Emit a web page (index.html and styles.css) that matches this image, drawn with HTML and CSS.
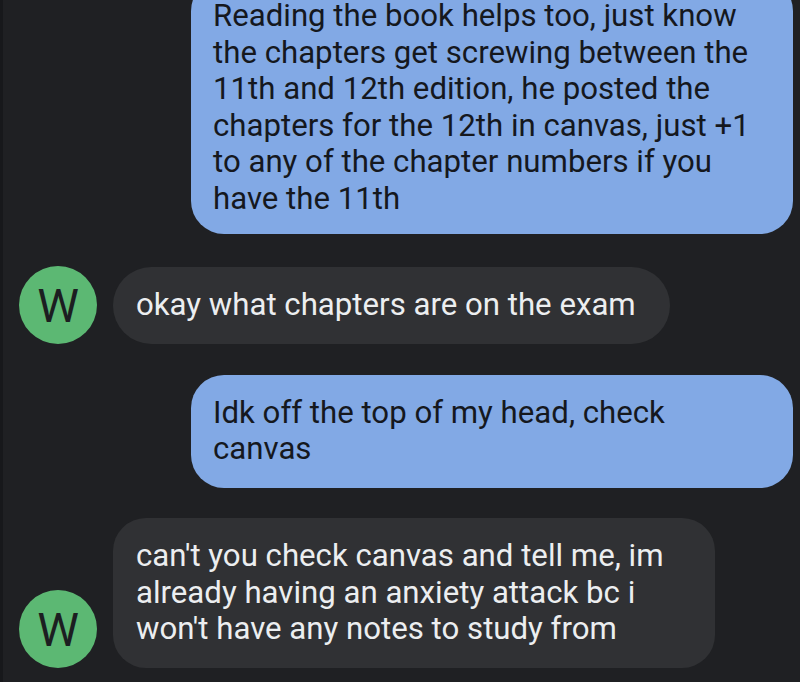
FILE: index.html
```html
<!DOCTYPE html>
<html>
<head>
<meta charset="utf-8">
<link rel="stylesheet" href="styles.css">
</head>
<body>
<div class="chat">
  <div class="row sent first">
    <div class="bubble blue">Reading the book helps too, just know<br>the chapters get screwing between the<br>11th and 12th edition, he posted the<br>chapters for the 12th in canvas, just +1<br>to any of the chapter numbers if you<br>have the 11th</div>
  </div>
  <div class="row recv">
    <div class="avatar">W</div>
    <div class="bubble grey">okay what chapters are on the exam</div>
  </div>
  <div class="row sent">
    <div class="bubble blue">Idk off the top of my head, check<br>canvas</div>
  </div>
  <div class="row recv">
    <div class="avatar">W</div>
    <div class="bubble grey wide">can't you check canvas and tell me, im<br>already having an anxiety attack bc i<br>won't have any notes to study from</div>
  </div>
</div>
</body>
</html>
```

FILE: styles.css
```css
html, body {
  margin: 0;
  padding: 0;
  background: #1f2023;
  height: 100%;
  overflow: hidden;
}
body {
  border-left: 3px solid #17181b;
  box-sizing: border-box;
  font-family: Roboto, "Noto Sans", sans-serif;
}
.chat {
  display: flex;
  flex-direction: column;
  gap: 30.5px;
  padding: 0 7px 0 16px;
  margin-top: -22px;
}
.row {
  display: flex;
  align-items: flex-end;
}
.sent {
  justify-content: flex-end;
}
.first {
  margin-bottom: 2px;
}
.recv {
  gap: 16px;
}
.bubble {
  font-size: 31.2px;
  line-height: 36.6px;
  padding: 20px 23px;
  border-radius: 33px;
  box-sizing: border-box;
  white-space: nowrap;
}
.blue {
  background: #82a9e5;
  color: #15181e;
  width: 602px;
  padding-left: 22px;
}
.grey {
  background: #303134;
  color: #eceef0;
  border-radius: 39px;
  padding-right: 34px;
}
.grey.wide {
  width: 602px;
  border-radius: 33px;
}
.first .bubble {
  padding-bottom: 16px;
}
.avatar {
  width: 78px;
  height: 78px;
  border-radius: 50%;
  background: #5cb873;
  color: #1c1e21;
  font-size: 47px;
  display: flex;
  align-items: center;
  justify-content: center;
  flex-shrink: 0;
  font-weight: 400;
}
```
